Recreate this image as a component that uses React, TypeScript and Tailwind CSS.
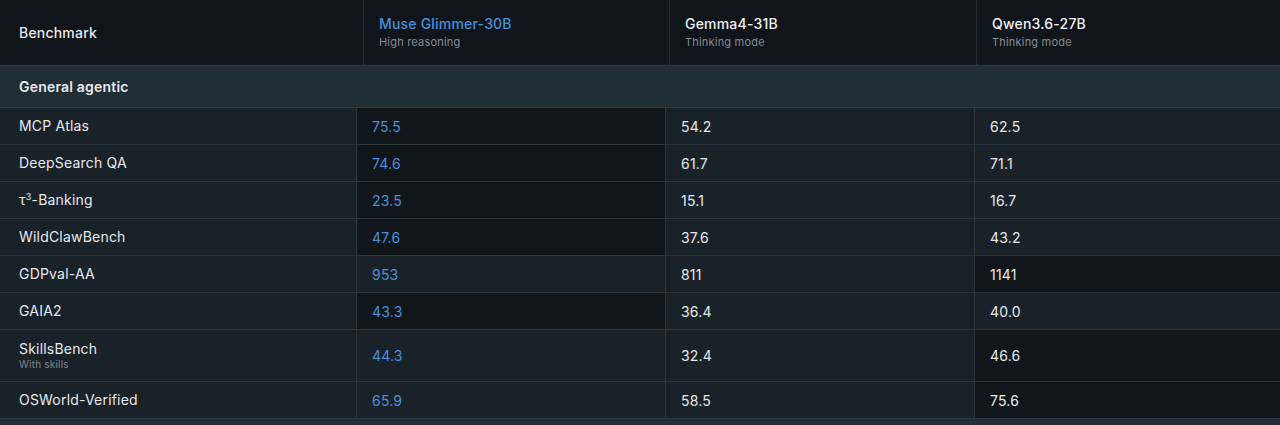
import React from 'react';

type Row = {
    name: React.ReactNode;
    note?: string;
    scores: string[];
    best: number;
    tall?: boolean;
};

const models = [
    { name: 'Muse Glimmer-30B', mode: 'High reasoning', accent: true },
    { name: 'Gemma4-31B', mode: 'Thinking mode' },
    { name: 'Qwen3.6-27B', mode: 'Thinking mode' },
];

const rows: Row[] = [
    { name: 'MCP Atlas', scores: ['75.5', '54.2', '62.5'], best: 0 },
    { name: 'DeepSearch QA', scores: ['74.6', '61.7', '71.1'], best: 0 },
    {
        name: (
            <>
                τ<sup className="text-[9px] relative -top-[5px]">3</sup>-Banking
            </>
        ),
        scores: ['23.5', '15.1', '16.7'],
        best: 0,
    },
    { name: 'WildClawBench', scores: ['47.6', '37.6', '43.2'], best: 0 },
    { name: 'GDPval-AA', scores: ['953', '811', '1141'], best: 2 },
    { name: 'GAIA2', scores: ['43.3', '36.4', '40.0'], best: 0 },
    { name: 'SkillsBench', note: 'With skills', scores: ['44.3', '32.4', '46.6'], best: 2, tall: true },
    { name: 'OSWorld-Verified', scores: ['65.9', '58.5', '75.6'], best: 2 },
];

const App = () => {
    return (
        <div
            className="w-[1280px] h-[425px] overflow-hidden bg-[#1a2229] text-[#e6e9ec] text-[14px] tracking-[0.2px]"
            style={{ fontFamily: 'Inter, "Noto Sans", sans-serif' }}
        >
            {/* Header */}
            <div className="grid grid-cols-[363px_306px_307px_1fr] h-[66px] bg-[#10151b] border-b border-[#2c363e]">
                <div className="flex items-center pl-[19px] font-medium">Benchmark</div>
                {models.map((m) => (
                    <div key={m.name} className="border-l border-[#262f37] pl-[15px] pt-[15px]">
                        <div className={`font-medium leading-[18px] ${m.accent ? 'text-[#4a90dc]' : 'text-[#eef0f2]'}`}>
                            {m.name}
                        </div>
                        <div className="text-[11px] leading-[14px] text-[#858c93] mt-[2px]">{m.mode}</div>
                    </div>
                ))}
            </div>

            {/* Section */}
            <div className="h-[42px] flex items-center pl-[19px] bg-[#222e36] border-b border-[#2f3a43] font-semibold">
                General agentic
            </div>

            {/* Rows */}
            {rows.map((r, i) => (
                <div
                    key={i}
                    className={`grid grid-cols-[356px_309px_309px_1fr] border-b border-[#2c363e] ${r.tall ? 'h-[52px]' : 'h-[37px]'}`}
                >
                    <div className="flex flex-col justify-center pl-[19px]">
                        <div className="leading-[18px]">{r.name}</div>
                        {r.note && <div className="text-[10px] leading-[13px] text-[#7f878e]">{r.note}</div>}
                    </div>
                    {r.scores.map((s, j) => (
                        <div
                            key={j}
                            className={`flex items-center pl-[15px] border-l border-[#2c363e] ${
                                j === r.best ? 'bg-[#11161b]' : ''
                            } ${j === 0 ? 'text-[#4a90dc]' : 'text-[#e6e9ec]'}`}
                        >
                            {s}
                        </div>
                    ))}
                </div>
            ))}

            <div className="h-[42px] bg-[#222e36]" />
        </div>
    );
};

export default App;
